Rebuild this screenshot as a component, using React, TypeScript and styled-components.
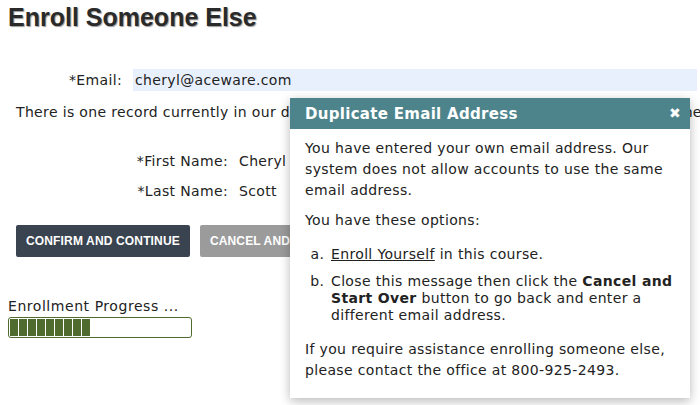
import React from "react";
import styled, { createGlobalStyle } from "styled-components";

const Global = createGlobalStyle`
  html, body { margin: 0; padding: 0; background: #fff; overflow: hidden; }
  body { width: 700px; height: 405px; font-family: Verdana, "DejaVu Sans", sans-serif; color: #222; letter-spacing: 0.35px; }
`;

const Page = styled.div`
  position: relative;
  width: 700px;
  height: 405px;
  overflow: hidden;
`;

const Title = styled.h1`
  margin: 0;
  padding: 3px 0 0 8px;
  font-family: "Liberation Sans", Arial, sans-serif;
  font-weight: bold;
  font-size: 25px;
  line-height: 28px;
  letter-spacing: 0;
  color: #2a2a2a;
  text-shadow: 1px 1px 1px #9a9a9a;
`;

const Form = styled.div`
  margin-top: 38px;
  display: flex;
  flex-direction: column;
`;

const Row = styled.div<{ $labelWidth: number; $mt?: number }>`
  display: grid;
  grid-template-columns: ${(p) => p.$labelWidth}px 1fr;
  column-gap: 11px;
  align-items: center;
  margin-top: ${(p) => p.$mt ?? 0}px;
  font-size: 14px;
  height: 22px;
`;

const Label = styled.span`
  text-align: right;
  white-space: nowrap;
`;

const Input = styled.div`
  background: #e8f0fe;
  height: 22px;
  line-height: 22px;
  padding-left: 2px;
  margin-right: 3px;
  white-space: nowrap;
`;

const Value = styled.span`
  white-space: nowrap;
`;

const Notice = styled.div`
  margin: 13px 0 0 16px;
  font-size: 14px;
  white-space: nowrap;
  line-height: 17px;
`;

const Buttons = styled.div`
  display: flex;
  gap: 10px;
  margin: 23px 0 0 16px;
`;

const Button = styled.div<{ $variant: "dark" | "grey" }>`
  height: 32px;
  padding: 0 10px;
  display: flex;
  align-items: center;
  border-radius: 2px;
  font-family: "Liberation Sans", Arial, sans-serif;
  font-weight: bold;
  font-size: 12px;
  letter-spacing: 0.15px;
  color: #fff;
  white-space: nowrap;
  background: ${(p) => (p.$variant === "dark" ? "#3a4450" : "#9b9b9b")};
`;

const Progress = styled.div`
  margin: 41px 0 0 8px;
  font-size: 14px;
`;

const ProgressLabel = styled.div`
  letter-spacing: 0.55px;
  white-space: nowrap;
`;

const Bar = styled.div`
  margin-top: 3px;
  width: 180px;
  height: 17px;
  border: 1px solid #4f6b2d;
  border-radius: 3px;
  padding: 1px;
  display: flex;
  gap: 1px;
`;

const Seg = styled.div`
  width: 8px;
  background: #4f6b2d;
`;

const Dialog = styled.div`
  position: absolute;
  left: 290px;
  top: 98px;
  width: 400px;
  background: #fff;
  box-shadow: 0 3px 10px rgba(0, 0, 0, 0.28);
  padding-bottom: 17px;
`;

const DialogHeader = styled.div`
  height: 31px;
  background: #4d848c;
  color: #fff;
  display: flex;
  align-items: center;
  justify-content: space-between;
  padding: 0 9px 0 15px;
  font-weight: bold;
  font-size: 15px;
  letter-spacing: 0.3px;
`;

const Close = styled.span`
  font-size: 14px;
  font-weight: bold;
  margin-top: -2px;
`;

const Body = styled.div`
  padding: 9px 15px 0 15px;
  font-size: 14px;
  line-height: 21px;
`;

const P = styled.p<{ $mt?: number }>`
  margin: ${(p) => p.$mt ?? 0}px 0 0 0;
`;

const List = styled.ol`
  list-style: lower-alpha;
  margin: 15px 0 0 0;
  padding-left: 24px;
  line-height: 17px;
`;

const Item = styled.li<{ $mt?: number }>`
  margin-top: ${(p) => p.$mt ?? 0}px;
  padding-left: 2px;
`;

const Link = styled.a`
  color: #222;
  text-decoration: underline;
`;

export default function App() {
  return (
    <Page>
      <Global />
      <Title>Enroll Someone Else</Title>
      <Form>
        <Row $labelWidth={122}>
          <Label>*Email:</Label>
          <Input>cheryl@aceware.com</Input>
        </Row>
        <Notice>
          There is one record currently in our database with this email address. Please verify the names below.
        </Notice>
        <Row $labelWidth={228} $mt={29}>
          <Label>*First Name:</Label>
          <Value>Cheryl</Value>
        </Row>
        <Row $labelWidth={228} $mt={8}>
          <Label>*Last Name:</Label>
          <Value>Scott</Value>
        </Row>
      </Form>
      <Buttons>
        <Button $variant="dark">CONFIRM AND CONTINUE</Button>
        <Button $variant="grey">CANCEL AND START OVER</Button>
      </Buttons>
      <Progress>
        <ProgressLabel>Enrollment Progress ...</ProgressLabel>
        <Bar>
          {Array.from({ length: 9 }).map((_, i) => (
            <Seg key={i} />
          ))}
        </Bar>
      </Progress>
      <Dialog>
        <DialogHeader>
          <span>Duplicate Email Address</span>
          <Close>✖</Close>
        </DialogHeader>
        <Body>
          <P>
            You have entered your own email address. Our system does not allow accounts to use the same email
            address.
          </P>
          <P $mt={9}>You have these options:</P>
          <List>
            <Item>
              <Link href="#">Enroll Yourself</Link> in this course.
            </Item>
            <Item $mt={10}>
              Close this message then click the <b>Cancel and Start Over</b> button to go back and enter a
              different email address.
            </Item>
          </List>
          <P $mt={15}>
            If you require assistance enrolling someone else, please contact the office at 800-925-2493.
          </P>
        </Body>
      </Dialog>
    </Page>
  );
}
